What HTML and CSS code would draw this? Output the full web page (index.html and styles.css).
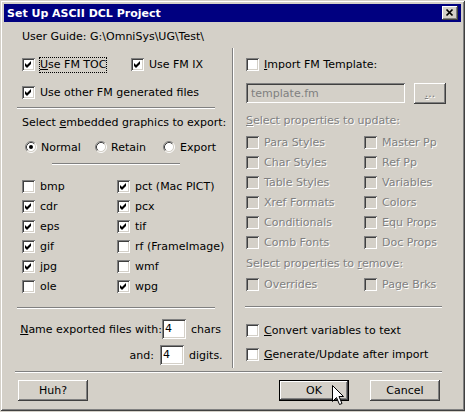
FILE: index.html
```html
<!DOCTYPE html>
<html>
<head>
<meta charset="utf-8">
<link rel="stylesheet" href="styles.css">
</head>
<body>
<div class="window">
  <div class="titlebar">
    <span class="title">Set Up ASCII DCL Project</span>
    <span class="close"><svg width="16" height="14" viewBox="0 0 16 14"><path d="M4.5 3.5 L10.5 9.5 M10.5 3.5 L4.5 9.5" stroke="#000" stroke-width="1.7" fill="none"/></svg></span>
  </div>
  <div class="body">
    <div class="guide">User Guide: G:\OmniSys\UG\Test\</div>
    <div class="panels">
      <div class="left">
        <div class="row r1">
          <div class="item toc"><span class="cb"><svg width="13" height="13" viewBox="0 0 13 13"><polygon points="3,5 5,7 9,3 9,6 5,10 3,8" fill="#000"/></svg></span><span class="lbl focus"><u>U</u>se FM TOC</span></div>
          <div class="item"><span class="cb"><svg width="13" height="13" viewBox="0 0 13 13"><polygon points="3,5 5,7 9,3 9,6 5,10 3,8" fill="#000"/></svg></span><span class="lbl">Use FM IX</span></div>
        </div>
        <div class="row r2">
          <div class="item"><span class="cb"><svg width="13" height="13" viewBox="0 0 13 13"><polygon points="3,5 5,7 9,3 9,6 5,10 3,8" fill="#000"/></svg></span><span class="lbl">Use other FM generated files</span></div>
        </div>
        <div class="sep s1"></div>
        <div class="text t1">Select <u>e</u>mbedded graphics to export:</div>
        <div class="radios">
          <div class="ritem normal"><svg class="rb" width="12" height="12" viewBox="0 0 12 12"><circle cx="6" cy="6" r="4.5" fill="#fff"/><path d="M2.11 9.89 A5.5 5.5 0 0 1 9.89 2.11" stroke="#808080" fill="none"/><path d="M9.89 2.11 A5.5 5.5 0 0 1 2.11 9.89" stroke="#fff" fill="none"/><path d="M2.82 9.18 A4.5 4.5 0 0 1 9.18 2.82" stroke="#404040" fill="none"/><path d="M9.18 2.82 A4.5 4.5 0 0 1 2.82 9.18" stroke="#d4d0c8" fill="none"/><circle cx="6" cy="6" r="2" fill="#000"/></svg><span class="lbl">Normal</span></div>
          <div class="ritem retain"><svg class="rb" width="12" height="12" viewBox="0 0 12 12"><circle cx="6" cy="6" r="4.5" fill="#fff"/><path d="M2.11 9.89 A5.5 5.5 0 0 1 9.89 2.11" stroke="#808080" fill="none"/><path d="M9.89 2.11 A5.5 5.5 0 0 1 2.11 9.89" stroke="#fff" fill="none"/><path d="M2.82 9.18 A4.5 4.5 0 0 1 9.18 2.82" stroke="#404040" fill="none"/><path d="M9.18 2.82 A4.5 4.5 0 0 1 2.82 9.18" stroke="#d4d0c8" fill="none"/></svg><span class="lbl">Retain</span></div>
          <div class="ritem export"><svg class="rb" width="12" height="12" viewBox="0 0 12 12"><circle cx="6" cy="6" r="4.5" fill="#fff"/><path d="M2.11 9.89 A5.5 5.5 0 0 1 9.89 2.11" stroke="#808080" fill="none"/><path d="M9.89 2.11 A5.5 5.5 0 0 1 2.11 9.89" stroke="#fff" fill="none"/><path d="M2.82 9.18 A4.5 4.5 0 0 1 9.18 2.82" stroke="#404040" fill="none"/><path d="M9.18 2.82 A4.5 4.5 0 0 1 2.82 9.18" stroke="#d4d0c8" fill="none"/></svg><span class="lbl">Export</span></div>
        </div>
        <div class="sep s2"></div>
        <div class="grid ggrid">
          <div class="item"><span class="cb"></span><span class="lbl">bmp</span></div>
          <div class="item"><span class="cb"><svg width="13" height="13" viewBox="0 0 13 13"><polygon points="3,5 5,7 9,3 9,6 5,10 3,8" fill="#000"/></svg></span><span class="lbl">pct (Mac PICT)</span></div>
          <div class="item"><span class="cb"><svg width="13" height="13" viewBox="0 0 13 13"><polygon points="3,5 5,7 9,3 9,6 5,10 3,8" fill="#000"/></svg></span><span class="lbl">cdr</span></div>
          <div class="item"><span class="cb"><svg width="13" height="13" viewBox="0 0 13 13"><polygon points="3,5 5,7 9,3 9,6 5,10 3,8" fill="#000"/></svg></span><span class="lbl">pcx</span></div>
          <div class="item"><span class="cb"><svg width="13" height="13" viewBox="0 0 13 13"><polygon points="3,5 5,7 9,3 9,6 5,10 3,8" fill="#000"/></svg></span><span class="lbl">eps</span></div>
          <div class="item"><span class="cb"><svg width="13" height="13" viewBox="0 0 13 13"><polygon points="3,5 5,7 9,3 9,6 5,10 3,8" fill="#000"/></svg></span><span class="lbl">tif</span></div>
          <div class="item"><span class="cb"><svg width="13" height="13" viewBox="0 0 13 13"><polygon points="3,5 5,7 9,3 9,6 5,10 3,8" fill="#000"/></svg></span><span class="lbl">gif</span></div>
          <div class="item"><span class="cb"></span><span class="lbl">rf (FrameImage)</span></div>
          <div class="item"><span class="cb"><svg width="13" height="13" viewBox="0 0 13 13"><polygon points="3,5 5,7 9,3 9,6 5,10 3,8" fill="#000"/></svg></span><span class="lbl">jpg</span></div>
          <div class="item"><span class="cb"></span><span class="lbl">wmf</span></div>
          <div class="item"><span class="cb"></span><span class="lbl">ole</span></div>
          <div class="item"><span class="cb"><svg width="13" height="13" viewBox="0 0 13 13"><polygon points="3,5 5,7 9,3 9,6 5,10 3,8" fill="#000"/></svg></span><span class="lbl">wpg</span></div>
        </div>
        <div class="sep s3"></div>
        <div class="namerow n1"><span class="nlbl"><u>N</u>ame exported files with:</span><span class="field">4</span><span class="unit">chars</span></div>
        <div class="namerow n2"><span class="nlbl">and:</span><span class="field">4</span><span class="unit">digits.</span></div>
      </div>
      <div class="right">
        <div class="row r1">
          <div class="item"><span class="cb"></span><span class="lbl"><u>I</u>mport FM Template:</span></div>
        </div>
        <div class="tplrow">
          <span class="tfield">template.fm</span>
          <span class="btn small dis"><span class="dtext"><u>.</u>..</span></span>
        </div>
        <div class="text dtext t2"><u>S</u>elect properties to update:</div>
        <div class="grid pgrid">
          <div class="item"><span class="cb dis"></span><span class="lbl dtext">Para Styles</span></div>
          <div class="item"><span class="cb dis"></span><span class="lbl dtext">Master Pp</span></div>
          <div class="item"><span class="cb dis"></span><span class="lbl dtext">Char Styles</span></div>
          <div class="item"><span class="cb dis"></span><span class="lbl dtext">Ref Pp</span></div>
          <div class="item"><span class="cb dis"></span><span class="lbl dtext">Table Styles</span></div>
          <div class="item"><span class="cb dis"></span><span class="lbl dtext">Variables</span></div>
          <div class="item"><span class="cb dis"></span><span class="lbl dtext">Xref Formats</span></div>
          <div class="item"><span class="cb dis"></span><span class="lbl dtext">Colors</span></div>
          <div class="item"><span class="cb dis"></span><span class="lbl dtext">Conditionals</span></div>
          <div class="item"><span class="cb dis"></span><span class="lbl dtext">Equ Props</span></div>
          <div class="item"><span class="cb dis"></span><span class="lbl dtext">Comb Fonts</span></div>
          <div class="item"><span class="cb dis"></span><span class="lbl dtext">Doc Props</span></div>
        </div>
        <div class="text dtext t3">Select properties to <u>r</u>emove:</div>
        <div class="grid pgrid rgrid">
          <div class="item"><span class="cb dis"></span><span class="lbl dtext">Overrides</span></div>
          <div class="item"><span class="cb dis"></span><span class="lbl dtext">Page Brks</span></div>
        </div>
        <div class="sep s4"></div>
        <div class="row r3">
          <div class="item"><span class="cb"></span><span class="lbl"><u>C</u>onvert variables to text</span></div>
        </div>
        <div class="row r4">
          <div class="item"><span class="cb"></span><span class="lbl"><u>G</u>enerate/Update after import</span></div>
        </div>
      </div>
    </div>
    <div class="sep s5"></div>
    <div class="buttons">
      <span class="btn huh">Huh?</span>
      <span class="btn ok default">OK</span>
      <span class="btn cancel">Cancel</span>
    </div>
  </div>
  <svg class="cursor" width="13" height="21" viewBox="0 0 13 21"><polygon points="0.5,0.5 0.5,16.5 4.5,12.5 7.5,19.5 10,18.5 7,11.5 11.5,11.5" fill="#fff" stroke="#000" stroke-width="1"/></svg>
</div>
</body>
</html>
```
FILE: styles.css
```css
html, body {
  margin: 0;
  padding: 0;
  background: #d4d0c8;
}
body {
  font-family: "DejaVu Sans", sans-serif;
  font-size: 11px;
  line-height: 13px;
  color: #000;
}
u { text-decoration: underline; text-underline-offset: 1px; }

.window {
  position: relative;
  width: 465px;
  height: 411px;
  box-sizing: border-box;
  padding: 4px;
  background: #d4d0c8;
  box-shadow: inset 1px 1px #d4d0c8, inset -1px -1px #404040, inset 2px 2px #fff, inset -2px -2px #808080;
}

.titlebar {
  height: 18px;
  background: #000080;
  display: flex;
  align-items: center;
  justify-content: space-between;
  padding: 0 3px 0 3px;
}
.title {
  color: #fff;
  font-weight: bold;
  font-size: 11px;
}
.close {
  width: 16px;
  height: 14px;
  background: #d4d0c8;
  box-shadow: inset -1px -1px #404040, inset 1px 1px #fff, inset -2px -2px #808080, inset 2px 2px #d4d0c8;
  display: flex;
}

.body {
  display: flex;
  flex-direction: column;
}
.guide {
  margin: 8px 0 0 18px;
}
.panels {
  display: flex;
  margin: 5px 0 0 13px;
}
.left {
  width: 215px;
  border-right: 1px solid #808080;
  box-shadow: 1px 0 #fff;
  padding: 10px 0 3px 0;
  display: flex;
  flex-direction: column;
}
.right {
  flex: 1;
  padding: 10px 0 0 13px;
  display: flex;
  flex-direction: column;
}

.row {
  display: flex;
  height: 13px;
}
.left .row, .left .text, .left .radios, .left .grid { margin-left: 5px; }
.item {
  display: flex;
  align-items: center;
  height: 13px;
}
.toc { width: 109px; flex: none; }
.r2 { margin-top: 15px; }
.cb {
  width: 13px;
  height: 13px;
  box-sizing: border-box;
  background: #fff;
  box-shadow: inset 1px 1px #808080, inset -1px -1px #fff, inset 2px 2px #404040, inset -2px -2px #d4d0c8;
  flex: none;
  display: flex;
}
.cb.dis { background: #d4d0c8; }
.lbl {
  margin-left: 5px;
  white-space: nowrap;
}
.lbl.focus {
  margin-left: 4px;
  padding: 1px 1px 2px 1px;
  margin-top: -1px;
  margin-bottom: -1px;
  outline: 1px dotted #000;
  outline-offset: -1px;
}
.dtext {
  color: #808080;
  text-shadow: 1px 1px #fff;
}

.sep {
  height: 0;
  border-top: 1px solid #808080;
  border-bottom: 1px solid #fff;
}
.s1 { width: 198px; margin-top: 8px; }
.t1 { margin-top: 7px; }
.radios {
  display: flex;
  margin-top: 12px;
  padding-left: 3px;
}
.ritem {
  display: flex;
  align-items: center;
  height: 12px;
  flex: none;
}
.rb { flex: none; }
.ritem .lbl { margin-left: 4px; }
.normal { width: 70px; }
.retain { width: 68px; }
.export .lbl { margin-left: 5px; }
.s2 { width: 128px; margin: 10px 0 0 35px; }

.grid {
  display: grid;
  row-gap: 7px;
}
.ggrid {
  grid-template-columns: 95px 1fr;
  margin-top: 15px;
}
.s3 { width: 198px; margin-top: 14px; }

.namerow {
  display: flex;
  align-items: center;
  height: 20px;
}
.n1 { margin-top: 10px; }
.n2 { margin-top: 6px; }
.nlbl {
  text-align: right;
  white-space: nowrap;
}
.n1 .nlbl { width: 145px; }
.n2 .nlbl { width: 137px; margin-right: 6px; }
.field {
  width: 24px;
  height: 20px;
  box-sizing: border-box;
  padding: 3px 0 0 3px;
  background: #fff;
  box-shadow: inset 1px 1px #808080, inset -1px -1px #fff, inset 2px 2px #404040, inset -2px -2px #d4d0c8;
}
.unit { margin-left: 5px; }

.tplrow {
  display: flex;
  margin-top: 12px;
  align-items: flex-start;
}
.tfield {
  width: 159px;
  height: 20px;
  box-sizing: border-box;
  padding: 4px 0 0 5px;
  color: #808080;
  background: #d4d0c8;
  box-shadow: inset 1px 1px #808080, inset -1px -1px #fff, inset 2px 2px #404040, inset -2px -2px #d4d0c8;
}
.btn {
  height: 21px;
  width: 70px;
  box-sizing: border-box;
  display: flex;
  align-items: center;
  justify-content: center;
  background: #d4d0c8;
  box-shadow: inset -1px -1px #404040, inset 1px 1px #fff, inset -2px -2px #808080, inset 2px 2px #d4d0c8;
}
.btn.small { width: 32px; margin-left: 9px; }
.btn.default {
  border: 1px solid #000;
}
.t2 { margin-top: 10px; }
.pgrid {
  grid-template-columns: 118px 1fr;
  margin-top: 9px;
}
.t3 { margin-top: 8px; }
.rgrid { margin-top: 8px; }
.s4 { width: 197px; margin: 15px 0 0 -1px; }
.r3 { margin-top: 16px; }
.r4 { margin-top: 11px; }

.s5 { width: 427px; margin: 3px 0 0 11px; }
.buttons {
  display: flex;
  margin: 7px 0 0 14px;
}
.ok { margin-left: auto; }
.cancel { margin: 0 21px 0 21px; }

.cursor {
  position: absolute;
  left: 332px;
  top: 385px;
}
```
